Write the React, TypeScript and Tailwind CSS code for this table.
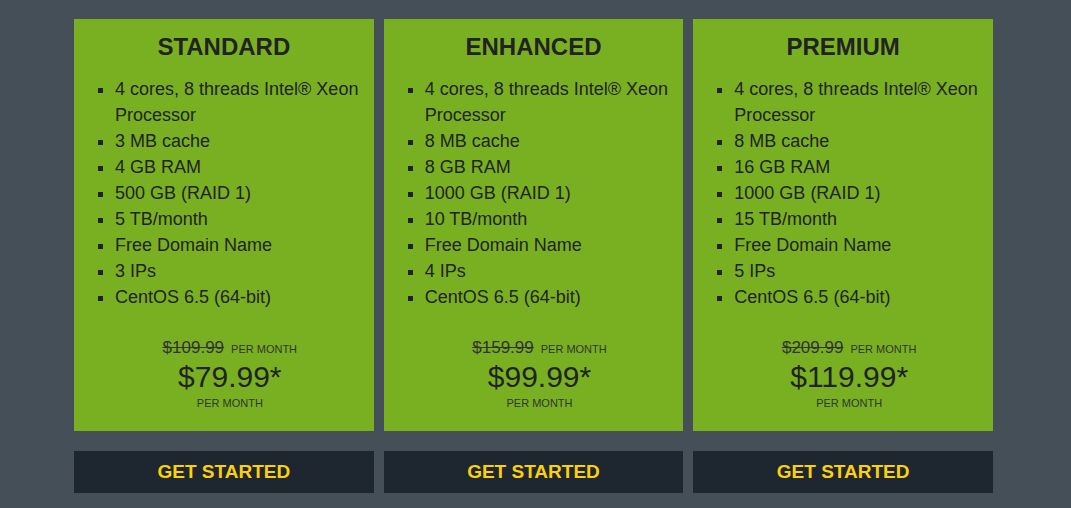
import React from "react";

type Plan = {
  name: string;
  features: string[];
  old: string;
  price: string;
};

const plans: Plan[] = [
  {
    name: "STANDARD",
    features: [
      "4 cores, 8 threads Intel® Xeon Processor",
      "3 MB cache",
      "4 GB RAM",
      "500 GB (RAID 1)",
      "5 TB/month",
      "Free Domain Name",
      "3 IPs",
      "CentOS 6.5 (64-bit)",
    ],
    old: "$109.99",
    price: "$79.99*",
  },
  {
    name: "ENHANCED",
    features: [
      "4 cores, 8 threads Intel® Xeon Processor",
      "8 MB cache",
      "8 GB RAM",
      "1000 GB (RAID 1)",
      "10 TB/month",
      "Free Domain Name",
      "4 IPs",
      "CentOS 6.5 (64-bit)",
    ],
    old: "$159.99",
    price: "$99.99*",
  },
  {
    name: "PREMIUM",
    features: [
      "4 cores, 8 threads Intel® Xeon Processor",
      "8 MB cache",
      "16 GB RAM",
      "1000 GB (RAID 1)",
      "15 TB/month",
      "Free Domain Name",
      "5 IPs",
      "CentOS 6.5 (64-bit)",
    ],
    old: "$209.99",
    price: "$119.99*",
  },
];

export default function App() {
  return (
    <div
      className="min-h-[508px] w-full bg-[#444f57] pl-[74px] pt-[19px]"
      style={{ fontFamily: '"Liberation Sans", Arial, sans-serif' }}
    >
      <div className="grid w-[919px] grid-cols-3 gap-[10px]">
        {plans.map((p) => (
          <div key={p.name} className="flex flex-col">
            <div className="flex h-[412px] flex-col bg-[#79b021] text-[#222222]">
              <h2 className="pt-[15px] text-center text-[24px] font-bold leading-[26px]">
                {p.name}
              </h2>
              <ul className="mt-[16px] pr-[10px]">
                {p.features.map((f) => (
                  <li key={f} className="flex text-[18px] leading-[26px]">
                    <span className="flex h-[26px] w-[41px] shrink-0 items-center pl-[24px]">
                      <span className="mt-[2px] block h-[5px] w-[5px] bg-[#222222]" />
                    </span>
                    <span className="flex-1">{f}</span>
                  </li>
                ))}
              </ul>
              <div className="mt-[28px] flex flex-col items-center pl-[12px]">
                <div className="flex items-baseline gap-[7px] leading-[20px]">
                  <span className="text-[17px] text-[#333333] line-through">{p.old}</span>
                  <span className="text-[11px] text-[#333333]">PER MONTH</span>
                </div>
                <div className="text-[30px] leading-[36px] text-[#222222]">{p.price}</div>
                <div className="text-[11px] leading-[16px] text-[#333333]">PER MONTH</div>
              </div>
            </div>
            <button className="mt-[20px] h-[42px] w-full bg-[#1e2730] text-center text-[19px] font-bold leading-[40px] text-[#fdd10a]">
              GET STARTED
            </button>
          </div>
        ))}
      </div>
    </div>
  );
}
